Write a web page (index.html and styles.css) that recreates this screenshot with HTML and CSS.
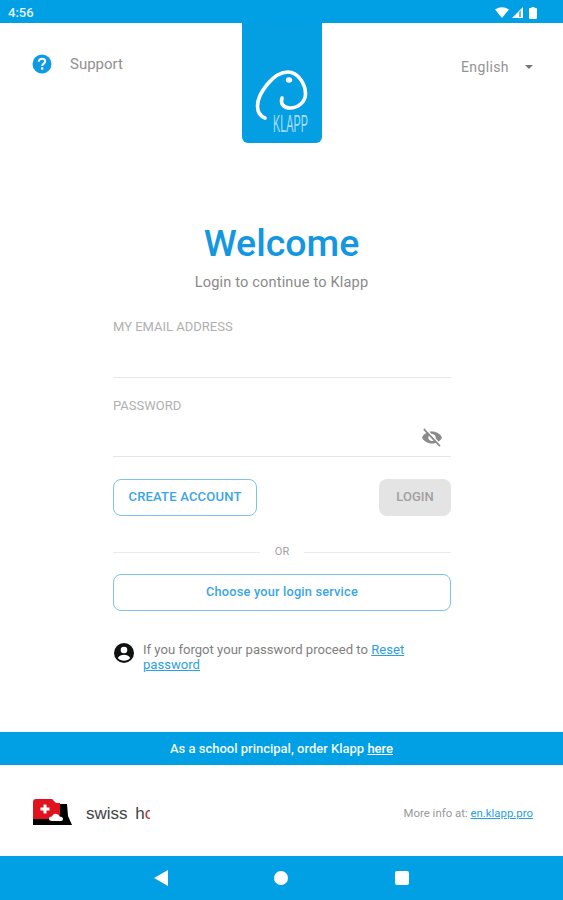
FILE: index.html
```html
<!DOCTYPE html>
<html lang="en">
<head>
    <meta charset="UTF-8">
    <meta name="viewport" content="width=device-width, initial-scale=1.0">
    <title>Klapp Login</title>
    <link rel="stylesheet" href="styles.css">
</head>
<body>
    <div class="status-bar">
        <span class="time">4:56</span>
        <div class="status-icons">
            <svg width="14" height="11" viewBox="0 0 14 11"><path d="M0 2.500Q7-2 14 2.500L7 11Z" fill="#fff"/></svg>
            <svg width="11" height="11" viewBox="0 0 11 11"><path d="M11 0V11H0Z" fill="#fff"/><path d="M7 5V10H9V3Z" fill="#5db9e8"/></svg>
            <svg class="battery" width="8" height="12" viewBox="0 0 8 12"><path d="M2.500 0H5.500V1H7Q8 1 8 2V11Q8 12 7 12H1Q0 12 0 11V2Q0 1 1 1H2.500Z" fill="#fff"/></svg>
        </div>
    </div>

    <header class="top">
        <a class="support" href="#">
            <svg width="20" height="20" viewBox="0 0 20 20">
                <circle cx="10" cy="10" r="9.500" fill="#0f9be3"/>
                <path d="M6.800 7.800C6.800 5.900 8.200 4.800 10 4.800S13.200 5.900 13.200 7.500C13.200 9.600 10.200 9.700 10.200 12" fill="none" stroke="#fff" stroke-width="2"/>
                <rect x="9" y="13.300" width="2.300" height="2.300" fill="#fff"/>
            </svg>
            <span>Support</span>
        </a>
        <div class="logo-tab">
            <svg width="80" height="73" viewBox="0 0 80 73">
                <path d="M23 48C18 46 15.500 42 15.500 36C15.500 24 31 2 46 2C56 2 63.500 14 63.500 24C63.500 32 56 38 48 38C42 38 38 34 40 28" fill="none" stroke="#fff" stroke-width="3.600" stroke-linecap="round"/>
                <ellipse cx="47" cy="10" rx="3.200" ry="2.800" fill="#fff"/>
                <text class="logo-name" x="31" y="62" textLength="35" lengthAdjust="spacingAndGlyphs">KLAPP</text>
            </svg>
        </div>
        <div class="lang">
            <span>English</span>
            <i class="caret"></i>
        </div>
    </header>

    <main class="login">
        <h1>Welcome</h1>
        <p class="sub">Login to continue to Klapp</p>

        <form class="form">
            <label class="field">
                <span>MY EMAIL ADDRESS</span>
            </label>
            <label class="field">
                <span>PASSWORD</span>
                <svg class="eye" width="24" height="24" viewBox="0 0 24 24">
                    <path d="M12 6.500C7.500 6.500 3.700 9 2 12.500C3.700 16 7.500 18.500 12 18.500S20.300 16 22 12.500C20.300 9 16.500 6.500 12 6.500ZM12 9C14 9 15.700 10.500 15.700 12.500S14 16 12 16S8.300 14.500 8.300 12.500S10 9 12 9Z" fill="#8a8a8a"/>
                    <path d="M4 4L20 21" stroke="#8a8a8a" stroke-width="2"/>
                    <path d="M5.500 3.500L21 20" stroke="#fff" stroke-width="1.200"/>
                </svg>
            </label>

            <div class="actions">
                <button class="btn-outline" type="button">CREATE ACCOUNT</button>
                <button class="btn-disabled" type="button">LOGIN</button>
            </div>

            <div class="or"><span>OR</span></div>

            <button class="btn-outline btn-wide" type="button">Choose your login service</button>

            <div class="forgot">
                <svg width="22" height="22" viewBox="0 0 22 22">
                    <circle cx="11" cy="11" r="10" fill="#111"/>
                    <circle cx="11" cy="8" r="3.300" fill="#fff"/>
                    <path d="M4.800 16C6 13.500 8.500 12.800 11 12.800S16 13.500 17.200 16C15.800 17.700 13.500 18.800 11 18.800S6.200 17.700 4.800 16Z" fill="#fff"/>
                </svg>
                <p>If you forgot your password proceed to <a href="#">Reset password</a></p>
            </div>
        </form>
    </main>

    <div class="promo">As a school principal, order Klapp <a href="#">here</a></div>

    <footer class="footer">
        <div class="brand">
            <svg width="41" height="28" viewBox="0 0 41 28">
                <path d="M1 27V20H28V6H35L36 18L40 27Z" fill="#000"/>
                <path d="M1 21V4Q1 1 4 1H20L24 5H28V21Z" fill="#e0121d"/>
                <path d="M11.500 6.500H14.500V9.500H17.500V12.500H14.500V15.500H11.500V12.500H8.500V9.500H11.500Z" fill="#fff"/>
                <path d="M20 23Q17 23 17 20.500Q17 18.500 20 18.500Q21 15 24.500 16Q27 16 27.500 18.500Q31 18.500 31 21Q31 23 29 23Z" fill="#fff"/>
            </svg>
            <div class="brand-name">swiss h<span class="red">c</span></div>
        </div>
        <p class="more">More info at: <a href="#">en.klapp.pro</a></p>
    </footer>

    <nav class="nav-bar">
        <svg width="14" height="16" viewBox="0 0 14 16"><path d="M14 0V16L0 8Z" fill="#fff"/></svg>
        <i class="home"></i>
        <i class="recent"></i>
    </nav>
</body>
</html>
```

FILE: styles.css
```css
body {
    font-family: Roboto, sans-serif;
    background-color: #ffffff;
    margin: 0;
    padding: 0;
    height: 900px;
    display: flex;
    flex-direction: column;
    overflow: hidden;
    color: #777;
}

a {
    color: #2a9fe2;
}

.status-bar {
    height: 23px;
    flex: none;
    background-color: #019fe3;
    display: flex;
    align-items: center;
    justify-content: space-between;
    padding: 2px 26px 0 8px;
    box-sizing: border-box;
    color: #e4f4fc;
}

.time {
    font-size: 13px;
    font-weight: 500;
}

.status-icons {
    display: flex;
    align-items: center;
    gap: 3px;
}

.battery {
    margin-left: 3px;
}

.top {
    height: 120px;
    flex: none;
    display: grid;
    grid-template-columns: 1fr 80px 1fr;
}

.support {
    display: flex;
    align-items: center;
    gap: 18px;
    align-self: start;
    margin: 31px 0 0 32px;
    font-size: 15px;
    color: #909090;
    text-decoration: none;
}

.logo-tab {
    background-color: #049fe3;
    border-radius: 0 0 6px 6px;
    display: flex;
    align-items: flex-end;
}

.logo-name {
    font-family: "Liberation Sans", sans-serif;
    font-size: 24px;
    fill: #a9dcf5;
}

.lang {
    display: flex;
    align-items: center;
    justify-content: flex-end;
    align-self: start;
    gap: 16px;
    margin-top: 36px;
    padding-right: 30px;
    font-size: 14px;
    color: #949494;
    letter-spacing: 0.4px;
}

.caret {
    width: 0;
    height: 0;
    border-left: 4px solid transparent;
    border-right: 4px solid transparent;
    border-top: 4px solid #777;
}

.login {
    flex: 1;
    display: flex;
    flex-direction: column;
    align-items: center;
    padding-top: 79px;
}

.login h1 {
    margin: 0;
    font-size: 37.5px;
    line-height: 42px;
    font-weight: 500;
    color: #1497e0;
}

.sub {
    margin: 8px 0 0;
    font-size: 14.6px;
    line-height: 20px;
    color: #8a8a8a;
    letter-spacing: 0.15px;
}

.form {
    width: 338px;
    margin: 27px 0 0 1px;
}

.field {
    display: block;
    position: relative;
    height: 58px;
    margin-bottom: 20px;
    border-bottom: 1px solid #e6e6e6;
    font-size: 13px;
    line-height: 16px;
    color: #b0b0b0;
}

.eye {
    position: absolute;
    right: 7px;
    bottom: 7px;
}

.actions {
    display: flex;
    justify-content: space-between;
    margin-top: 22px;
}

.actions button,
.btn-wide {
    height: 37px;
    border-radius: 8px;
    font-family: Roboto, sans-serif;
    font-size: 13px;
    font-weight: 500;
}

.btn-outline {
    width: 144px;
    padding: 0 0 2px;
    background-color: #ffffff;
    border: 1px solid #7cc2ec;
    color: #3aa5e4;
    letter-spacing: 0.2px;
}

.btn-disabled {
    width: 72px;
    padding: 0 0 2px;
    background-color: #e4e4e4;
    border: none;
    color: #a0a0a0;
}

.or {
    display: flex;
    align-items: center;
    gap: 15px;
    margin: 28px 0 14px;
    font-size: 11px;
    line-height: 16px;
    color: #a0a0a0;
}

.or::before,
.or::after {
    content: "";
    flex: 1;
    border-top: 1px solid #ebebeb;
}

.btn-wide {
    display: block;
    width: 100%;
    font-size: 12.75px;
}

.forgot {
    display: flex;
    gap: 8px;
    margin-top: 31px;
}

.forgot svg {
    flex: none;
}

.forgot p {
    margin: 0;
    font-size: 13.1px;
    line-height: 15px;
    color: #808080;
    width: 285px;
}

.promo {
    height: 33px;
    flex: none;
    background-color: #019fe3;
    color: #eef8fd;
    font-size: 13px;
    font-weight: 500;
    line-height: 33px;
    text-align: center;
}

.promo a {
    color: #ffffff;
}

.footer {
    height: 91px;
    flex: none;
    display: flex;
    align-items: center;
    justify-content: space-between;
    padding: 3px 30px 0 32px;
    box-sizing: border-box;
}

.brand {
    display: flex;
    align-items: center;
    gap: 13px;
}

.brand-name {
    width: 64px;
    margin-top: 3px;
    overflow: hidden;
    white-space: nowrap;
    font-family: "Liberation Sans", sans-serif;
    font-size: 17px;
    word-spacing: 3px;
    color: #444;
}

.brand-name .red {
    color: #b8303a;
}

.more {
    margin: 1px 0 0;
    font-size: 11.4px;
    color: #999;
}

.nav-bar {
    height: 44px;
    flex: none;
    background-color: #019fe3;
    display: flex;
    align-items: center;
    justify-content: center;
    gap: 106.500px;
    padding-right: 1px;
}

.home {
    width: 14px;
    height: 14px;
    border-radius: 50%;
    background-color: #ffffff;
}

.recent {
    width: 14px;
    height: 14px;
    border-radius: 2px;
    background-color: #ffffff;
}
```
